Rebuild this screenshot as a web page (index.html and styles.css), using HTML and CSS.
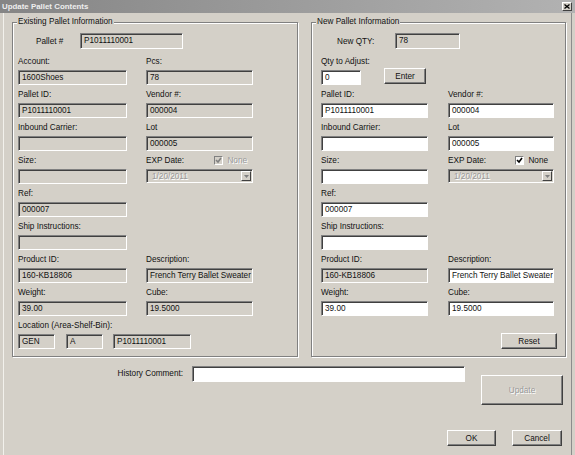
FILE: index.html
```html
<!DOCTYPE html>
<html lang="en">
<head>
    <meta charset="UTF-8">
    <title>Update Pallet Contents</title>
    <link rel="stylesheet" href="styles.css">
</head>
<body>

<div class="window">
    <div class="titlebar">
        <span class="title">Update Pallet Contents</span>
        <span class="close-btn">
            <svg width="6" height="5" viewBox="0 0 6 5"><path d="M0.5 0.5 L5.5 4.5 M5.5 0.5 L0.5 4.5" stroke="#000" stroke-width="1.3"/></svg>
        </span>
    </div>

    <div class="client">
        <div class="groups">
            <!-- existing pallet (read only) -->
            <fieldset class="group group-old">
                <legend>Existing Pallet Information</legend>
                <div class="gbody gbody-old">
                    <div class="head-row head-old">
                        <span class="head-lbl">Pallet #</span>
                        <div class="field w-pallet">P1011110001</div>
                    </div>
                    <div class="rows rows-old">
                        <div class="cell"><div class="lbl">Account:</div><div class="field">1600Shoes</div></div>
                        <div class="cell"><div class="lbl">Pcs:</div><div class="field">78</div></div>
                        <div class="cell"><div class="lbl">Pallet ID:</div><div class="field">P1011110001</div></div>
                        <div class="cell"><div class="lbl">Vendor #:</div><div class="field">000004</div></div>
                        <div class="cell"><div class="lbl">Inbound Carrier:</div><div class="field"></div></div>
                        <div class="cell"><div class="lbl">Lot</div><div class="field">000005</div></div>
                        <div class="cell"><div class="lbl">Size:</div><div class="field"></div></div>
                        <div class="cell">
                            <div class="lbl">EXP Date:
                                <span class="opt disabled"><span class="chk"><svg width="7" height="7" viewBox="0 0 7 7"><path d="M1 3 L3 5 L6 1" fill="none" stroke="#808080" stroke-width="1.6"/></svg></span>None</span>
                            </div>
                            <div class="combo"><span class="combo-text">1/20/2011</span><span class="drop"><svg width="5" height="3" viewBox="0 0 5 3"><path d="M0 0 H5 L2.5 3 Z" fill="#808080"/></svg></span></div>
                        </div>
                        <div class="cell"><div class="lbl">Ref:</div><div class="field">000007</div></div>
                        <div class="cell"></div>
                        <div class="cell"><div class="lbl">Ship Instructions:</div><div class="field"></div></div>
                        <div class="cell"></div>
                        <div class="cell"><div class="lbl">Product ID:</div><div class="field">160-KB18806</div></div>
                        <div class="cell"><div class="lbl">Description:</div><div class="field">French Terry Ballet Sweater</div></div>
                        <div class="cell"><div class="lbl">Weight:</div><div class="field">39.00</div></div>
                        <div class="cell"><div class="lbl">Cube:</div><div class="field">19.5000</div></div>
                        <div class="cell span2">
                            <div class="lbl">Location (Area-Shelf-Bin):</div>
                            <div class="loc-row">
                                <div class="field w-area">GEN</div>
                                <div class="field w-shelf">A</div>
                                <div class="field w-bin">P1011110001</div>
                            </div>
                        </div>
                    </div>
                </div>
            </fieldset>

            <!-- new pallet (editable) -->
            <fieldset class="group group-new">
                <legend>New Pallet Information</legend>
                <div class="gbody gbody-new">
                    <div class="head-row head-new">
                        <span class="head-lbl">New QTY:</span>
                        <div class="field w-qty">78</div>
                    </div>
                    <div class="rows rows-new">
                        <div class="cell span2">
                            <div class="lbl">Qty to Adjust:</div>
                            <div class="qty-row">
                                <div class="field edit w-adjust">0</div>
                                <button class="btn btn-enter">Enter</button>
                            </div>
                        </div>
                        <div class="cell"><div class="lbl">Pallet ID:</div><div class="field edit">P1011110001</div></div>
                        <div class="cell"><div class="lbl">Vendor #:</div><div class="field edit">000004</div></div>
                        <div class="cell"><div class="lbl">Inbound Carrier:</div><div class="field edit"></div></div>
                        <div class="cell"><div class="lbl">Lot</div><div class="field edit">000005</div></div>
                        <div class="cell"><div class="lbl">Size:</div><div class="field edit"></div></div>
                        <div class="cell">
                            <div class="lbl">EXP Date:
                                <span class="opt"><span class="chk on"><svg width="7" height="7" viewBox="0 0 7 7"><path d="M1 3 L3 5 L6 1" fill="none" stroke="#000" stroke-width="1.6"/></svg></span>None</span>
                            </div>
                            <div class="combo"><span class="combo-text">1/20/2011</span><span class="drop"><svg width="5" height="3" viewBox="0 0 5 3"><path d="M0 0 H5 L2.5 3 Z" fill="#808080"/></svg></span></div>
                        </div>
                        <div class="cell"><div class="lbl">Ref:</div><div class="field edit">000007</div></div>
                        <div class="cell"></div>
                        <div class="cell"><div class="lbl">Ship Instructions:</div><div class="field edit"></div></div>
                        <div class="cell"></div>
                        <div class="cell"><div class="lbl">Product ID:</div><div class="field">160-KB18806</div></div>
                        <div class="cell"><div class="lbl">Description:</div><div class="field edit">French Terry Ballet Sweater</div></div>
                        <div class="cell"><div class="lbl">Weight:</div><div class="field edit">39.00</div></div>
                        <div class="cell"><div class="lbl">Cube:</div><div class="field edit">19.5000</div></div>
                    </div>
                    <div class="reset-row">
                        <button class="btn btn-reset">Reset</button>
                    </div>
                </div>
            </fieldset>
        </div>

        <div class="history">
            <span class="history-lbl">History Comment:</span>
            <div class="field edit w-history"></div>
            <button class="btn btn-update" disabled>Update</button>
        </div>

        <div class="actions">
            <button class="btn btn-ok">OK</button>
            <button class="btn btn-cancel">Cancel</button>
        </div>
    </div>
</div>

</body>
</html>
```

FILE: styles.css
```css
* {
    box-sizing: border-box;
}

body {
    margin: 0;
    background-color: #d4d0c8;
    font-family: "Liberation Sans", Arial, sans-serif;
    font-size: 8.2px;
    color: #111;
}

.window {
    width: 575px;
    height: 455px;
    display: flex;
    flex-direction: column;
    background-color: #d4d0c8;
    overflow: hidden;
}

.titlebar {
    height: 13px;
    flex: none;
    display: flex;
    align-items: center;
    justify-content: space-between;
    padding: 0 3px 0 2px;
    background: linear-gradient(to right, #858585, #b2b2b2);
}

.title {
    color: #eeeeee;
    font-weight: bold;
    font-size: 7.9px;
}

.close-btn {
    width: 10px;
    height: 9px;
    display: flex;
    align-items: center;
    justify-content: center;
    background-color: #d4d0c8;
    border: 1px solid;
    border-color: #fff #404040 #404040 #fff;
}

.client {
    flex: 1;
    padding: 3px 9px 0 12px;
    box-shadow: inset 3px 0 0 #d4d0c8, inset 4px 0 0 #f2f1ec, inset -3px 0 0 #d4d0c8, inset -4px 0 0 #8c8c8c;
}

/* group boxes */
.groups {
    display: flex;
    gap: 13px;
}

.group {
    margin: 0;
    padding: 0;
    min-width: 0;
    border: 1px solid #808080;
    box-shadow: inset 1px 1px 0 #fff, 1px 1px 0 #fff;
}

.group-old {
    width: 286px;
}

.group-new {
    width: 255px;
}

.group legend {
    margin-left: 4px;
    padding: 0 1px;
    line-height: 12px;
    background-color: #d4d0c8;
}

.gbody-old {
    padding: 5px 0 6px 5px;
}

.gbody-new {
    padding: 5px 8px 6px 9px;
}

.head-row {
    display: flex;
    align-items: center;
    height: 16px;
}

.head-old {
    padding-left: 18px;
}

.head-old .head-lbl {
    width: 44px;
}

.head-new {
    padding-left: 16px;
}

.head-new .head-lbl {
    width: 58px;
}

.head-row .field {
    height: 16px;
    line-height: 14px;
}

.rows {
    display: grid;
    margin-top: 4px;
}

.rows-old {
    grid-template-columns: 109px 107px;
    column-gap: 19px;
}

.rows-new {
    grid-template-columns: 107px 106px;
    column-gap: 20px;
}

.span2 {
    grid-column: 1 / -1;
}

.lbl {
    height: 17px;
    line-height: 17px;
    white-space: nowrap;
    display: flex;
    align-items: center;
}

/* text boxes */
.field {
    height: 15px;
    margin-bottom: 1px;
    padding: 0 3px;
    line-height: 13px;
    white-space: nowrap;
    overflow: hidden;
    background-color: #d4d0c8;
    border: 1px solid;
    border-color: #808080 #fff #fff #808080;
    box-shadow: inset 1px 1px 0 #404040;
}

.field.edit {
    background-color: #fff;
}

.w-pallet { width: 103px; }
.w-qty { width: 65px; }
.w-adjust { width: 40px; }
.w-area { width: 37px; }
.w-shelf { width: 37px; }
.w-bin { width: 78px; }
.w-history { width: 273px; height: 16px; }

.loc-row {
    display: flex;
    gap: 11px;
}

.loc-row .w-shelf {
    margin-right: -1px;
}

.qty-row {
    display: flex;
    align-items: flex-start;
}

/* checkbox */
.opt {
    display: flex;
    align-items: center;
    gap: 4px;
    margin-left: auto;
    margin-right: 6px;
}

.opt.disabled {
    color: #9a9a9a;
    text-shadow: 1px 1px 0 #fff;
}

.chk {
    width: 9px;
    height: 9px;
    display: flex;
    align-items: center;
    justify-content: center;
    background-color: #d4d0c8;
    border: 1px solid;
    border-color: #808080 #fff #fff #808080;
}

.chk.on {
    background-color: #fff;
}

/* disabled combo */
.combo {
    height: 14px;
    display: flex;
    align-items: center;
    justify-content: space-between;
    padding: 0 1px 0 3px;
    border: 1px solid;
    border-color: #808080 #fff #fff #808080;
    box-shadow: inset 1px 1px 0 #404040;
}

.combo-text {
    color: #9a9a9a;
    text-shadow: 1px 1px 0 #fff;
    padding-left: 2px;
}

.drop {
    width: 10px;
    height: 10px;
    display: flex;
    align-items: center;
    justify-content: center;
    background-color: #d4d0c8;
    border: 1px solid;
    border-color: #fff #404040 #404040 #fff;
}

/* buttons */
.btn {
    font-family: inherit;
    font-size: inherit;
    color: #111;
    padding: 0;
    background-color: #d4d0c8;
    border: 1px solid;
    border-color: #fff #404040 #404040 #fff;
    box-shadow: inset -1px -1px 0 #808080;
}

.btn-enter {
    width: 42px;
    height: 16px;
    margin-left: 23px;
    margin-top: -2px;
}

.reset-row {
    display: flex;
    justify-content: flex-end;
    margin-top: 16px;
}

.btn-reset {
    width: 56px;
    height: 16px;
}

/* bottom area */
.history {
    display: flex;
    align-items: flex-start;
    margin-top: 9px;
}

.history-lbl {
    width: 171px;
    margin-right: 9px;
    line-height: 16px;
    text-align: right;
}

.btn-update {
    width: 82px;
    height: 30px;
    margin-left: 16px;
    margin-top: 9px;
    color: #9a9a9a;
    text-shadow: 1px 1px 0 #fff;
}

.actions {
    display: flex;
    justify-content: flex-end;
    gap: 16px;
    margin-top: 25px;
    padding-right: 4px;
}

.btn-ok {
    width: 49px;
    height: 16px;
}

.btn-cancel {
    width: 50px;
    height: 16px;
}
```
